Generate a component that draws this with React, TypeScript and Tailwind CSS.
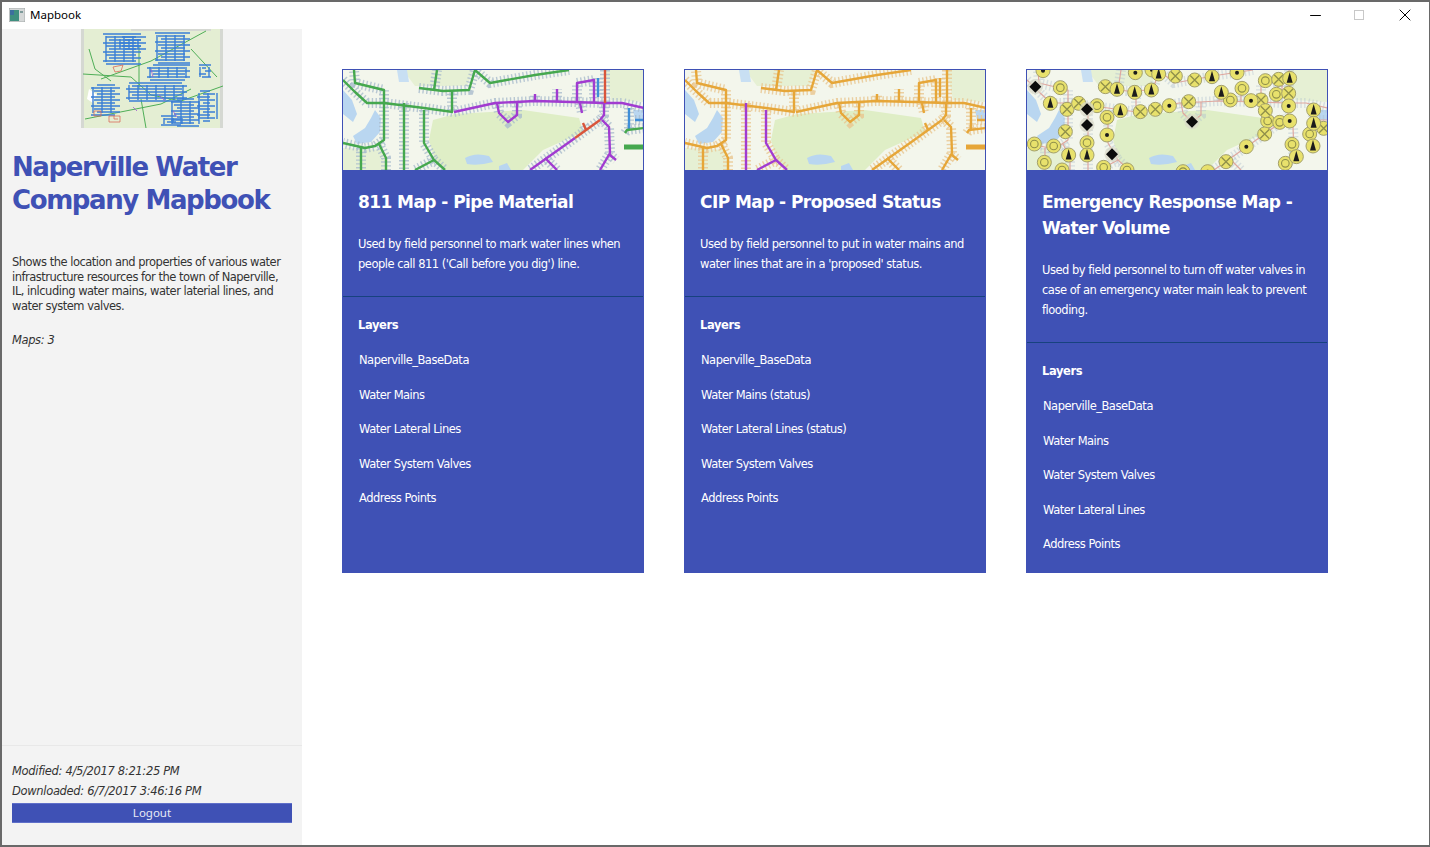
import { X, Minus } from 'lucide-react';

const tahoma = 'font-["DejaVu_Sans",sans-serif]';

type Road = { d: string; kind?: string };

// shared street network for the three map thumbnails
const roads: Road[] = [
  { d: 'M0 10 L12 22 L24 33 L41 33 L81 38 L110 42' },
  { d: 'M41 33 L41 20 L12 13 L11 0' },
  { d: 'M41 33 L41 70 L32 76 L22 78 L0 73' },
  { d: 'M61 33 L61 100', kind: 'a' },
  { d: 'M81 40 L81 73 L91 90 L72 100', kind: 'a' },
  { d: 'M91 90 L102 100', kind: 'a' },
  { d: 'M18 78 L18 100' },
  { d: 'M36 74 L43 88 L43 100' },
  { d: 'M91 20 L94 0' },
  { d: 'M76 18 L100 21 L126 20 L132 0' },
  { d: 'M132 0 L147 13 L192 5 L226 0' },
  { d: 'M109 20 L109 42' },
  { d: 'M111 42 L152 33 L192 31 L229 32 L261 33 L279 33 L301 38', kind: 'p' },
  { d: 'M154 33 L156 43 L165 52 L174 45 L174 32', kind: 'p' },
  { d: 'M192 31 L192 24 M214 31 L214 19', kind: 'p' },
  { d: 'M261 33 L261 45 L257 50', kind: 'p' },
  { d: 'M232 68 L187 100', kind: 'p' },
  { d: 'M202 88 L214 100', kind: 'p' },
  { d: 'M259 50 L266 57 L267 83 L257 100 M267 85 L273 90', kind: 'p' },
  { d: 'M234 32 L234 13 L251 10 L251 32 M237 33 L239 43', kind: 'p' },
  { d: 'M257 50 L232 68 M243 60 L240 53', kind: 'r' },
  { d: 'M262 0 L262 33', kind: 'r' },
  { d: 'M255 8 L255 27', kind: 'b' },
  { d: 'M286 38 L286 60 M292 50 L301 50', kind: 'b' },
  { d: 'M282 63 L284 60 L301 58', kind: 'g' },
];

const roadColor: Record<string, Record<string, string>> = {
  pipe: { main: '#45a84e', a: '#45a84e', p: '#a13bd0', r: '#d9553b', b: '#3f8ed8', g: '#45a84e' },
  cip: { main: '#e6a638', a: '#a13bd0', p: '#e6a638', r: '#e6a638', b: '#e6a638', g: '#e6a638' },
  valves: { main: '#dfa79f', a: '#dfa79f', p: '#dfa79f', r: '#dfa79f', b: '#dfa79f', g: '#dfa79f' },
};

// marker positions read off the reference, in 3x crop coordinates
const markers: Record<string, number[][]> = {
  ring: [[120, 83], [230, 137], [260, 172], [200, 248], [100, 258], [42, 252], [72, 307], [735, 62], [665, 85], [630, 120], [768, 103], [742, 183], [778, 187], [815, 253], [795, 310], [868, 222], [250, 322], [125, 330], [488, 335], [320, 330]],
  cross: [[255, 80], [140, 148], [175, 130], [135, 215], [360, 155], [405, 148], [505, 125], [465, 48], [523, 60], [775, 58], [805, 100], [722, 120], [735, 152], [733, 222], [617, 305], [910, 205]],
  dot: [[447, 137], [345, 38], [395, 30], [692, 122], [805, 138], [808, 183], [678, 260], [260, 225], [650, 38], [562, 335], [68, 32]],
  bell: [[90, 130], [290, 88], [343, 97], [393, 90], [300, 152], [145, 285], [200, 285], [575, 50], [415, 42], [603, 97], [808, 55], [880, 150], [828, 290], [880, 190], [878, 258]],
  diamond: [[45, 80], [200, 148], [200, 195], [275, 283], [515, 185]],
};

function Marker({ kind, x, y }: { kind: string; x: number; y: number }) {
  if (kind === 'diamond') {
    return (
      <g transform={`translate(${x} ${y})`}>
        <circle r="7.5" fill="#d8d8c8" opacity="0.7" />
        <path d="M0 -6 L6 0 L0 6 L-6 0 Z" fill="#0c0c0c" />
      </g>
    );
  }
  return (
    <g transform={`translate(${x} ${y})`}>
      <circle r="7" fill="#e8e16c" stroke="#a3a06a" strokeWidth="1" />
      {kind === 'bell' && <path d="M0 -6 L3 4.5 L-3 4.5 Z" fill="#1c1c1c" />}
      {kind === 'dot' && <circle r="2" fill="#1c1c1c" />}
      {kind === 'ring' && <circle r="3.8" fill="none" stroke="#8f8f4a" strokeWidth="1.1" />}
      {kind === 'cross' && <path d="M-4.5 -4.5 L4.5 4.5 M4.5 -4.5 L-4.5 4.5" stroke="#8f8f4a" strokeWidth="1.3" />}
    </g>
  );
}

function MapThumb({ variant }: { variant: string }) {
  const colors = roadColor[variant];
  const thin = variant === 'valves';
  return (
    <svg viewBox="0 0 300 100" className="block w-[300px] h-[100px] blur-[0.6px]">
      <rect width="300" height="100" fill="#f3f6ec" />
      <path d="M90 50 L112 44 L180 40 L236 48 L240 62 L200 80 L180 100 L100 100 L92 90 L86 70 Z" fill="#dfeec6" />
      <path d="M262 0 L300 0 L300 32 L268 30 Z M60 0 L130 0 L124 16 L72 16 Z M0 78 L40 80 L44 100 L0 100 Z" fill="#e6f0d4" />
      <path d="M0 20 L9 30 L14 44 L10 52 L0 44 Z" fill="#b9d6f0" />
      <path d="M32 40 L38 48 L37 62 L28 72 L14 74 L10 66 L22 58 L28 48 Z" fill="#b9d6f0" />
      <path d="M54 0 L64 0 L66 12 L56 12 Z" fill="#c8dff3" />
      <path d="M122 88 Q132 82 146 86 L150 92 Q136 96 124 94 Z M156 96 L164 93 L168 100 L156 100 Z" fill="#b9d6f0" />
      <path d="M290 40 L300 40 L300 50 L292 50 Z" fill="#b9d6f0" />
      {roads.map((road, i) => (
        <path key={`h${i}`} d={road.d} fill="none" stroke={variant === 'cip' ? '#e8c58e' : '#a9bccd'} strokeWidth="10" strokeDasharray="1.4 2.4" opacity={thin ? 0.4 : 0.8} />
      ))}
      {roads.map((road, i) => (
        <path key={i} d={road.d} fill="none" stroke={colors[road.kind ?? 'main']} strokeWidth={thin ? 1.2 : 2.4} strokeLinejoin="round" />
      ))}
      {!thin && <path d="M281 77 L301 77" stroke={variant === 'pipe' ? '#45a84e' : '#e6a638'} strokeWidth="5" />}
      {thin &&
        Object.entries(markers).flatMap(([kind, points]) =>
          points.map(([x, y], i) => <Marker key={`${kind}${i}`} kind={kind} x={(x - 20) / 3} y={(y - 30) / 3} />)
        )}
    </svg>
  );
}

const blueBlocks = [
  [22, 5, 38, 30], [36, 8, 30, 14], [73, 4, 38, 30], [66, 36, 46, 15], [116, 36, 18, 14],
  [9, 56, 30, 30], [45, 54, 62, 19], [88, 70, 32, 27], [115, 62, 22, 30], [80, 87, 24, 10],
];

function TownMap() {
  return (
    <svg viewBox="0 0 142 99" className="block w-[142px] h-[99px] blur-[0.5px]">
      <rect width="142" height="99" fill="#e4eed3" />
      <path d="M0 0 L3 0 L3 99 L0 99 Z M139 0 L142 0 L142 99 L139 99 Z M50 0 L130 0 L130 2 L50 2 Z" fill="#d5d8d2" />
      <path d="M8 60 L6 70 L12 74 L16 66 Z" fill="#ffffff" />
      <path d="M2 45 L50 48 L70 66 L100 72 L142 57 M4 90 L80 75 L110 60 M20 50 L70 32 L125 2 M8 20 L14 40 L30 52 M58 18 L58 60 M110 20 L136 48 M60 70 L65 99" fill="none" stroke="#4fae57" strokeWidth="1" />
      {blueBlocks.map(([x, y, w, h], i) => {
        const rows = [];
        for (let row = 0; row <= h; row += 3) {
          const inset = (row * 7 + i * 5) % 9;
          rows.push(`M${x + inset} ${y + row} H${x + w - ((row * 5 + i) % 10)}`);
        }
        for (let col = 3; col < w; col += 9) rows.push(`M${x + col} ${y + 2} V${y + h - 2}`);
        return <path key={i} d={rows.join(' ')} fill="none" stroke="#3a7fd6" strokeWidth="1.4" />;
      })}
      <path d="M13 82 H20 V87 H13 Z M28 87 H39 V93 H28 Z M33 87 V90 H37 M32 38 L42 36 L40 42 L34 43 Z" fill="none" stroke="#d9695a" strokeWidth="0.8" />
      <path d="M70 40 L72 48 M78 66 L84 72 M52 78 L56 82 M92 82 L96 88" fill="none" stroke="#a15ad0" strokeWidth="0.8" />
    </svg>
  );
}

const maps = [
  {
    variant: 'pipe',
    title: '811 Map - Pipe Material',
    description: "Used by field personnel to mark water lines when people call 811 ('Call before you dig') line.",
    layers: ['Naperville_BaseData', 'Water Mains', 'Water Lateral Lines', 'Water System Valves', 'Address Points'],
  },
  {
    variant: 'cip',
    title: 'CIP Map - Proposed Status',
    description: "Used by field personnel to put in water mains and water lines that are in a 'proposed' status.",
    layers: ['Naperville_BaseData', 'Water Mains (status)', 'Water Lateral Lines (status)', 'Water System Valves', 'Address Points'],
  },
  {
    variant: 'valves',
    title: 'Emergency Response Map - Water Volume',
    description: 'Used by field personnel to turn off water valves in case of an emergency water main leak to prevent flooding.',
    layers: ['Naperville_BaseData', 'Water Mains', 'Water System Valves', 'Water Lateral Lines', 'Address Points'],
  },
];

function MapCard({ map }: { map: (typeof maps)[number] }) {
  return (
    <div className="w-[302px] border border-[#3f51b5] bg-[#3f51b5] text-white flex flex-col">
      <div className="h-[100px] overflow-hidden bg-white">
        <MapThumb variant={map.variant} />
      </div>
      <div className="px-[15px] pt-[19px] pb-[22px] border-b border-[#17427f]">
        <h2 className="text-[17px] leading-[26px] font-bold tracking-[-0.57px]">{map.title}</h2>
        <p className="mt-[19px] text-[11.5px] leading-[20px] tracking-[-0.49px]">{map.description}</p>
      </div>
      <div className="px-[15px] pt-[20px] pb-[20px]">
        <h3 className="text-[11.5px] leading-[16px] font-bold tracking-[-0.4px]">Layers</h3>
        <ul className="mt-[19px] pl-px flex flex-col gap-[18.5px]">
          {map.layers.map((layer) => (
            <li key={layer} className="text-[11.5px] leading-[16px] tracking-[-0.5px]">
              {layer}
            </li>
          ))}
        </ul>
      </div>
    </div>
  );
}

export default function App() {
  return (
    <div className={`w-[1430px] h-[847px] overflow-hidden flex flex-col border-2 border-r border-[#696969] bg-white ${tahoma}`}>
      <div className="h-[27px] shrink-0 flex items-center bg-white">
        <svg viewBox="0 0 16 14" className="ml-[7px] -mt-px w-[16px] h-[14px]">
          <rect width="16" height="14" fill="#d5d8d8" stroke="#8a9090" strokeWidth="0.6" />
          <rect x="1" y="2" width="9" height="11" fill="#3f8f7f" />
          <rect x="1" y="2" width="4" height="5" fill="#3d6f9e" />
          <rect x="11" y="3" width="3" height="2" fill="#7d9a9a" />
        </svg>
        <span className='ml-[5px] -mt-px text-[11.5px] text-black font-["Noto_Sans",sans-serif]'>Mapbook</span>
        <div className="ml-auto -mt-px flex items-center text-black">
          <Minus size={17} strokeWidth={1.4} className="mr-[30px]" />
          <div className="w-[10px] h-[10px] border border-[#c8c8c8] mr-[31px]" />
          <X size={20} strokeWidth={1.2} className="mr-[14px]" />
        </div>
      </div>

      <div className="flex-1 flex min-h-0">
        <aside className="w-[300px] shrink-0 bg-[#f3f3f3] flex flex-col text-[#333333]">
          <div className="flex justify-center">
            <TownMap />
          </div>
          <h1 className="mt-[23px] px-[10px] text-[26px] leading-[33px] font-bold tracking-[-1.4px] text-[#3f51b5]">
            Naperville Water Company Mapbook
          </h1>
          <p className="mt-[38px] px-[10px] text-[11.5px] leading-[14.5px] tracking-[-0.5px]">
            Shows the location and properties of various water infrastructure resources for the town of Naperville, IL, inlcuding water mains, water laterial lines, and water system valves.
          </p>
          <p className="mt-[19px] px-[10px] text-[11.5px] leading-[16px] italic tracking-[-0.4px]">Maps: 3</p>

          <div className="mt-auto border-t border-[#e8e8e8] px-[10px] pt-[15px] pb-[22px]">
            <p className="text-[11.5px] leading-[20px] italic tracking-[-0.32px]">Modified: 4/5/2017 8:21:25 PM</p>
            <p className="text-[11.5px] leading-[20px] italic tracking-[-0.32px]">Downloaded: 6/7/2017 3:46:16 PM</p>
            <button className="mt-[2px] block w-[280px] h-[20px] bg-[#3f51b5] text-[#e8eaf6] text-[11.5px] leading-[18px] border-y border-[#5f6fc9] font-['Noto_Sans',sans-serif]">
              Logout
            </button>
          </div>
        </aside>

        <main className="flex-1 flex items-stretch gap-[40px] pl-[40px] pt-[40px] pb-[272px]">
          {maps.map((map) => (
            <MapCard key={map.title} map={map} />
          ))}
        </main>
      </div>
    </div>
  );
}
